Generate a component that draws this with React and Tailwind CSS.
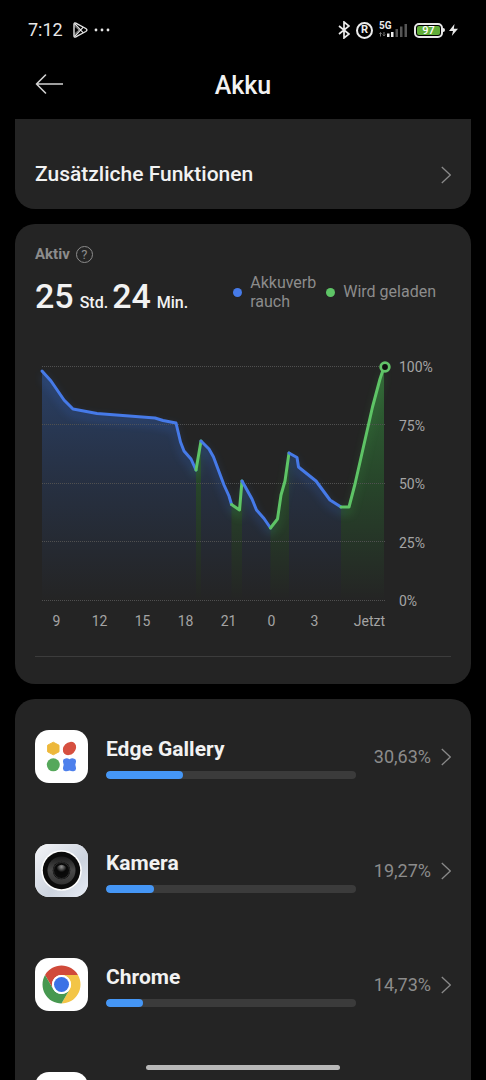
import React from "react";

const GRID = [367, 425, 484, 542, 601];

const SEGMENTS = [
  { charging: false, points: [[42, 371], [51, 381], [64, 400], [73, 409], [97, 413.5], [155, 418], [163, 420.5], [176, 423], [180.5, 442], [184, 451], [191, 459], [196, 470]] },
  { charging: true, points: [[196, 470], [201, 441]] },
  { charging: false, points: [[201, 441], [209, 449], [213.5, 457], [224, 485], [229, 496], [231.5, 504.5]] },
  { charging: true, points: [[231.5, 504.5], [239.5, 510], [242, 481]] },
  { charging: false, points: [[242, 481], [252, 499], [256.5, 510], [264, 518.5], [270.5, 528]] },
  { charging: true, points: [[270.5, 528], [277.5, 519], [281, 495], [285, 481], [289, 453]] },
  { charging: false, points: [[289, 453], [297, 457.5], [298.5, 467], [316, 481], [330, 500], [341, 507]] },
  { charging: true, points: [[341, 507], [349, 507], [355, 484], [372.5, 407], [380, 379], [384, 367]] },
];

const line = (pts) => pts.map((p, i) => (i ? "L" : "M") + p[0] + " " + p[1]).join(" ");
const area = (pts) => `${line(pts)} L${pts[pts.length - 1][0]} 601 L${pts[0][0]} 601 Z`;

function BatteryChart() {
  return (
    <svg viewBox="35 357 358 254" className="block min-w-0 flex-1" role="img" aria-label="Akkustand">
      <defs>
        <linearGradient id="use" gradientUnits="userSpaceOnUse" x1="0" y1="367" x2="0" y2="601">
          <stop offset="0" stopColor="#3470d8" stopOpacity="0.38" />
          <stop offset="0.5" stopColor="#3060b8" stopOpacity="0.2" />
          <stop offset="1" stopColor="#3060b8" stopOpacity="0" />
        </linearGradient>
        <linearGradient id="load" gradientUnits="userSpaceOnUse" x1="0" y1="367" x2="0" y2="601">
          <stop offset="0" stopColor="#3f9e48" stopOpacity="0.55" />
          <stop offset="0.5" stopColor="#2f9a3a" stopOpacity="0.28" />
          <stop offset="1" stopColor="#2f9a3a" stopOpacity="0" />
        </linearGradient>
        <filter id="glow" x="-20%" y="-20%" width="140%" height="140%">
          <feGaussianBlur stdDeviation="4" />
        </filter>
        <clipPath id="below">
          <path d={area(SEGMENTS.flatMap((s) => s.points))} />
        </clipPath>
      </defs>
      {SEGMENTS.map((s, i) => (
        <path key={i} d={area(s.points)} fill={s.charging ? "url(#load)" : "url(#use)"} />
      ))}
      {GRID.map((y) => (
        <path key={y} d={`M42 ${y - 0.5}H385`} stroke="#505050" strokeWidth="1" strokeDasharray="1 1" />
      ))}
      <g filter="url(#glow)" opacity="0.3">
        {SEGMENTS.map((s, i) => (
          <path key={i} d={line(s.points.map(([x, y]) => [x, y + 5]))} fill="none" stroke={s.charging ? "#3c9c45" : "#3469c8"} strokeWidth="5" clipPath="url(#below)" />
        ))}
      </g>
      {SEGMENTS.map((s, i) => (
        <path key={i} d={line(s.points)} fill="none" stroke={s.charging ? "#5ec466" : "#467ae8"} strokeWidth="3" strokeLinecap="round" strokeLinejoin="round" />
      ))}
      <circle cx="385" cy="367" r="4.3" fill="#101010" stroke="#62c468" strokeWidth="2.8" />
    </svg>
  );
}

function Chevron() {
  return (
    <svg viewBox="0 0 10 18" className="h-[18px] w-2.5 shrink-0" fill="none" stroke="#8a8a8a" strokeWidth="1.3" aria-hidden="true">
      <path d="M.8 1 9.300 9 .8 17" />
    </svg>
  );
}

function GalleryIcon() {
  return (
    <svg viewBox="0 0 53 53" className="size-full" aria-hidden="true">
      <path d="M18.3 12.2 24 15.2V21.8L18.3 24.8 12.6 21.8V15.2Z" fill="#edb83b" stroke="#edb83b" strokeLinejoin="round" />
      <ellipse cx="34.5" cy="18.500" rx="7.3" ry="5.900" fill="#d65040" transform="rotate(-45 34.5 18.5)" />
      <circle cx="18.3" cy="34.8" r="6.5" fill="#56a85b" />
      <path d="M30.500 28.500Q32.500 28 34.500 29.200Q36.500 28 38.500 28.500Q41.300 28.700 41 31.500Q40.800 33 40.300 34.700Q40.800 36.500 41 38Q41.300 41 38.500 41.200Q36.500 41.500 34.500 40.500Q32.500 41.500 30.500 41.200Q27.700 41 28 38Q28.200 36.500 28.700 34.700Q28.200 33 28 31.500Q27.700 28.700 30.500 28.500Z" fill="#4e80ec" />
    </svg>
  );
}

function CameraIcon() {
  return (
    <svg viewBox="0 0 53 53" className="size-full" aria-hidden="true">
      <defs>
        <linearGradient id="camBody" x1="0" y1="0" x2="1" y2="1">
          <stop offset="0" stopColor="#f4f5f8" />
          <stop offset="0.6" stopColor="#cdd4df" />
          <stop offset="1" stopColor="#e8edf5" />
        </linearGradient>
        <linearGradient id="camRing" x1="0" y1="0" x2="0" y2="1">
          <stop offset="0" stopColor="#1c1c1c" />
          <stop offset="0.5" stopColor="#4a4a4a" />
          <stop offset="1" stopColor="#333" />
        </linearGradient>
        <radialGradient id="camGlass" cx="0.5" cy="0.2" r="0.5">
          <stop offset="0" stopColor="#959595" />
          <stop offset="1" stopColor="#080808" />
        </radialGradient>
      </defs>
      <rect width="53" height="53" fill="url(#camBody)" />
      <circle cx="26.500" cy="26.500" r="20.300" fill="#fff" />
      <circle cx="26.500" cy="26.500" r="18.700" fill="#0b0b0b" />
      <circle cx="26.500" cy="26.500" r="14" fill="url(#camRing)" />
      <circle cx="26.500" cy="26.500" r="8.800" fill="#0a0a0a" />
      <circle cx="26.500" cy="26.500" r="8" fill="none" stroke="#2d2d2d" />
      <circle cx="26.500" cy="26" r="5.300" fill="url(#camGlass)" />
    </svg>
  );
}

function ChromeIcon() {
  return (
    <svg viewBox="0 0 53 53" className="size-full" aria-hidden="true">
      <g transform="translate(26.5 26.5)">
        <path d="M0 -9.500H16.450A19 19 0 0 0 -16.450 -9.500L-8.230 4.750A9.500 9.500 0 0 1 0 -9.500Z" fill="#d04a3a" />
        <path d="M8.230 4.750 0 19A19 19 0 0 0 16.450 -9.500H0A9.500 9.500 0 0 1 8.230 4.750Z" fill="#f3c547" />
        <path d="M-8.230 4.750 -16.450 -9.500A19 19 0 0 0 0 19L8.230 4.750A9.500 9.500 0 0 1 -8.230 4.750Z" fill="#479850" />
        <circle r="9.400" fill="#fff" />
        <circle r="7.500" fill="#3c72e6" />
      </g>
    </svg>
  );
}

const APPS = [
  { name: "Edge Gallery", share: "30,63%", value: 31, Icon: GalleryIcon },
  { name: "Kamera", share: "19,27%", value: 19.2, Icon: CameraIcon },
  { name: "Chrome", share: "14,73%", value: 15, Icon: ChromeIcon },
];

function StatusBar() {
  return (
    <div className="flex h-[60px] shrink-0 items-center justify-between px-7">
      <div className="flex items-center gap-2.5">
        <span className="text-lg text-[#e8e8e8]">7:12</span>
        <svg viewBox="0 0 15 16" className="h-4 w-[15px]" fill="none" stroke="#e6e6e6" strokeWidth="1.400" strokeLinejoin="round" aria-hidden="true">
          <path d="M1 2.200Q1 .3 2.800 1.200L12.800 6.500Q15 8 12.800 9.500L2.800 14.800Q1 15.700 1 13.800Z" />
          <path d="M1.500 1.500 10.300 10.800M1.500 14.500 10.300 5.200" strokeWidth="1.200" />
          <path d="M1.500 4 6 8 1.500 12" strokeWidth=".6" />
        </svg>
        <svg viewBox="0 0 16 4" className="-ml-1 h-1 w-4" fill="#e6e6e6" aria-hidden="true">
          <circle cx="2" cy="2" r="1.400" /><circle cx="8" cy="2" r="1.400" /><circle cx="14" cy="2" r="1.400" />
        </svg>
      </div>
      <div className="flex items-center gap-1.5">
        <svg viewBox="0 0 12 18" className="h-[18px] w-3" fill="none" stroke="#ececec" strokeWidth="1.700" aria-hidden="true">
          <path d="M1 5 11 13 6 17V1L11 5 1 13" />
        </svg>
        <span className="flex size-[17px] items-center justify-center rounded-full border-2 border-[#ececec] text-[11px] leading-3 font-bold text-[#ececec]">R</span>
        <div className="flex h-5 w-[29px] flex-col">
          <span className="h-[9px] text-[10px] leading-[11px] font-bold text-[#ececec]">5G</span>
          <svg viewBox="0 9 29 11" className="h-[11px] w-[29px] overflow-visible" aria-hidden="true">
            <path d="M1.500 12.500v4M5 12v4" stroke="#777" />
            <path d="M0 14 1.500 12.500 3 14M3.500 14.500 5 16 6.500 14.500" stroke="#777" fill="none" strokeWidth=".7" />
            <path d="M8 13.500H10.500V17H8ZM12 12H14.500V17H12Z" fill="#eee" />
            <path d="M16.500 9H19V17H16.500ZM21 6.500H23.500V17H21ZM25.500 4H28V17H25.500Z" fill="#555" />
          </svg>
        </div>
        <div className="flex items-center">
          <span className="flex h-[15px] w-[29px] items-center justify-center rounded-[5px] border-2 border-[#e8e8e8] bg-black p-px">
            <span className="flex h-full w-full items-center justify-center rounded-xs bg-[#60ad38] text-[11px] leading-[9px] font-medium text-white">97</span>
          </span>
          <span className="h-1 w-0.5 rounded-r bg-[#e8e8e8]" />
          <svg viewBox="0 0 9 12" className="ml-1 h-3 w-[9px]" fill="#e8e8e8" aria-hidden="true">
            <path d="M5.500 0 0 7H4L2.800 12 9 4.800H4.800Z" />
          </svg>
        </div>
      </div>
    </div>
  );
}

function Duration({ value, unit }) {
  return (
    <>
      <span className="text-[34px] leading-10 font-medium">{value}</span>
      <span className="ml-1.5 mr-1 text-base font-medium">{unit}</span>
    </>
  );
}

export default function App() {
  return (
    <div className="relative flex h-screen flex-col overflow-hidden bg-black font-['Roboto',sans-serif] text-[#f2f2f2]">
      <StatusBar />
      <header className="grid h-[59px] shrink-0 grid-cols-[1fr_auto_1fr] items-start px-[35px] pt-2">
        <button type="button" aria-label="Zurück" className="flex h-8 w-7 items-center">
          <svg viewBox="0 0 28 20" className="h-5 w-7" fill="none" stroke="#d2d2d2" strokeWidth="1.600" strokeLinecap="round" strokeLinejoin="round" aria-hidden="true">
            <path d="M10.500 1 1.500 10 10.500 19M1.500 10H27.500" />
          </svg>
        </button>
        <h1 className="text-[25px] leading-9 font-medium">Akku</h1>
      </header>

      <main className="flex min-h-0 flex-1 flex-col gap-[15px] overflow-y-auto px-[15px] [scrollbar-width:none]">
        <section className="shrink-0 rounded-b-[20px] bg-[#242424] px-5 pt-9 pb-3.5">
          <button type="button" className="flex h-10 w-full items-center justify-between text-left text-[21px] font-medium">
            Zusätzliche Funktionen
            <Chevron />
          </button>
        </section>

        <section className="shrink-0 rounded-[20px] bg-[#242424] px-5 pt-5 pb-[27px]">
          <div className="flex h-5 items-center gap-1.5 text-[#8c8c8c]">
            <h2 className="text-[15px] leading-5 font-bold">Aktiv</h2>
            <button type="button" aria-label="Hilfe" className="flex size-[17px] items-center justify-center rounded-full border border-[#8c8c8c] text-[13px] leading-none">?</button>
          </div>
          <div className="flex h-[62px] items-start justify-between">
            <p className="flex items-baseline pt-3">
              <Duration value="25" unit="Std." />
              <Duration value="24" unit="Min." />
            </p>
            <ul className="flex items-center pt-[9px] pr-[15px] text-base text-[#8c8c8c]">
              <li className="flex items-center gap-2">
                <span className="size-[9px] rounded-full bg-[#467ae8]" />
                <span className="leading-[19px]">Akkuverb<br />rauch</span>
              </li>
              <li className="ml-2.5 flex items-center gap-2">
                <span className="size-[9px] rounded-full bg-[#5ec466]" />
                Wird geladen
              </li>
            </ul>
          </div>
          <div className="mt-[31px] flex gap-1.5">
            <BatteryChart />
            <div className="flex w-[52px] shrink-0 flex-col justify-between text-sm leading-5 text-[#a4a4a4]">
              <span>100%</span><span>75%</span><span>50%</span><span>25%</span><span>0%</span>
            </div>
          </div>
          <div className="mr-[58px] grid grid-cols-[repeat(7,43fr)_57fr] text-sm leading-5 text-[#a4a4a4]">
            {["9", "12", "15", "18", "21", "0", "3"].map((h) => (
              <span key={h} className="text-center">{h}</span>
            ))}
            <span className="pr-2 text-right">Jetzt</span>
          </div>
          <hr className="mt-[25px] border-[#3c3c3c]" />
        </section>

        <section className="shrink-0 rounded-t-[20px] bg-[#242424] px-5">
          <ul>
            {APPS.map(({ name, share, value, Icon }) => (
              <li key={name}>
                <button type="button" className="flex h-[114px] w-full items-center text-left">
                  <span className="size-[53px] shrink-0 overflow-hidden rounded-[14px] bg-white"><Icon /></span>
                  <span className="ml-[18px] flex flex-1 flex-col gap-2 pt-0.5">
                    <span className="text-[21px] leading-7 font-bold">{name}</span>
                    <span className="block h-2 overflow-hidden rounded-full bg-[#3b3b3b]">
                      <span className="block h-full rounded-full bg-[#4596f5]" style={{ width: `${value}%` }} />
                    </span>
                  </span>
                  <span className="ml-[18px] flex items-center gap-2.5 pt-0.5 text-lg text-[#8c8c8c]">
                    {share}
                    <Chevron />
                  </span>
                </button>
              </li>
            ))}
            <li className="flex h-[114px] items-center">
              <span className="size-[53px] rounded-[14px] bg-white" />
            </li>
          </ul>
        </section>
      </main>
      <div className="absolute inset-x-0 bottom-[10px] flex justify-center">
        <span className="h-[5px] w-2/5 rounded-full bg-[#b8b8b8]" />
      </div>
    </div>
  );
}
